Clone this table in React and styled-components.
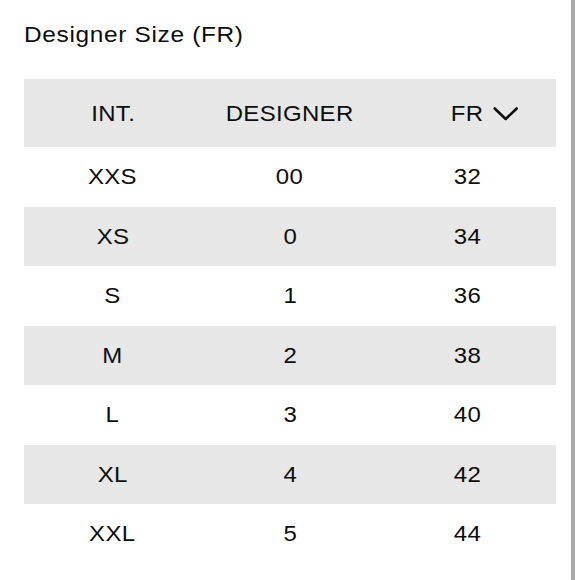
import React from "react";
import styled, { createGlobalStyle } from "styled-components";

const Global = createGlobalStyle`
  html, body { margin: 0; padding: 0; background: #fff; }
  body { font-family: "Liberation Sans", Arial, sans-serif; color: #0d0d0d; }
`;

const Page = styled.div`
  box-sizing: border-box;
  width: 575px;
  height: 580px;
  border-right: 4px solid #a9a9a9;
  padding: 23px 15px 0 24px;
  overflow: hidden;
`;

const Title = styled.h2`
  margin: 0 0 32px;
  font-weight: 400;
  font-size: 22px;
  line-height: 24px;
  letter-spacing: 0.6px;
  color: #0d0d0d;
  transform: scaleX(1.11);
  transform-origin: left center;
`;

const Table = styled.div`
  width: 532px;
  display: flex;
  flex-direction: column;
`;

const Row = styled.div`
  display: grid;
  grid-template-columns: repeat(3, 1fr);
  align-items: center;
  padding-top: 1px;
  box-sizing: border-box;
  height: ${(p) => (p.$header ? "68px" : "59.5px")};
  background: ${(p) => (p.$shaded ? "#e7e7e7" : "#ffffff")};
`;

const Cell = styled.div`
  position: relative;
  justify-self: center;
  font-size: 22px;
  line-height: 24px;
  letter-spacing: 0.3px;
  color: #0d0d0d;
  text-align: center;
  transform: scaleX(1.09);
`;

const Chevron = styled.svg`
  position: absolute;
  left: calc(100% + 9px);
  top: 50%;
  transform: translateY(-50%) scaleX(0.92);
  transform-origin: left center;
  width: 25px;
  height: 14px;
`;

const rows = [
  ["XXS", "00", "32"],
  ["XS", "0", "34"],
  ["S", "1", "36"],
  ["M", "2", "38"],
  ["L", "3", "40"],
  ["XL", "4", "42"],
  ["XXL", "5", "44"],
];

export default function App() {
  return (
    <>
      <Global />
      <Page>
        <Title>Designer Size (FR)</Title>
        <Table>
          <Row $header $shaded>
            <Cell>INT.</Cell>
            <Cell>DESIGNER</Cell>
            <Cell>
              FR
              <Chevron viewBox="0 0 25 14" fill="none">
                <path d="M1.5 1.5 L12.5 12 L23.5 1.5" stroke="#111" strokeWidth="2.6" strokeLinecap="round" strokeLinejoin="round" />
              </Chevron>
            </Cell>
          </Row>
          {rows.map((r, i) => (
            <Row key={r[0]} $shaded={i % 2 === 1}>
              {r.map((c, j) => (
                <Cell key={j}>{c}</Cell>
              ))}
            </Row>
          ))}
        </Table>
      </Page>
    </>
  );
}
